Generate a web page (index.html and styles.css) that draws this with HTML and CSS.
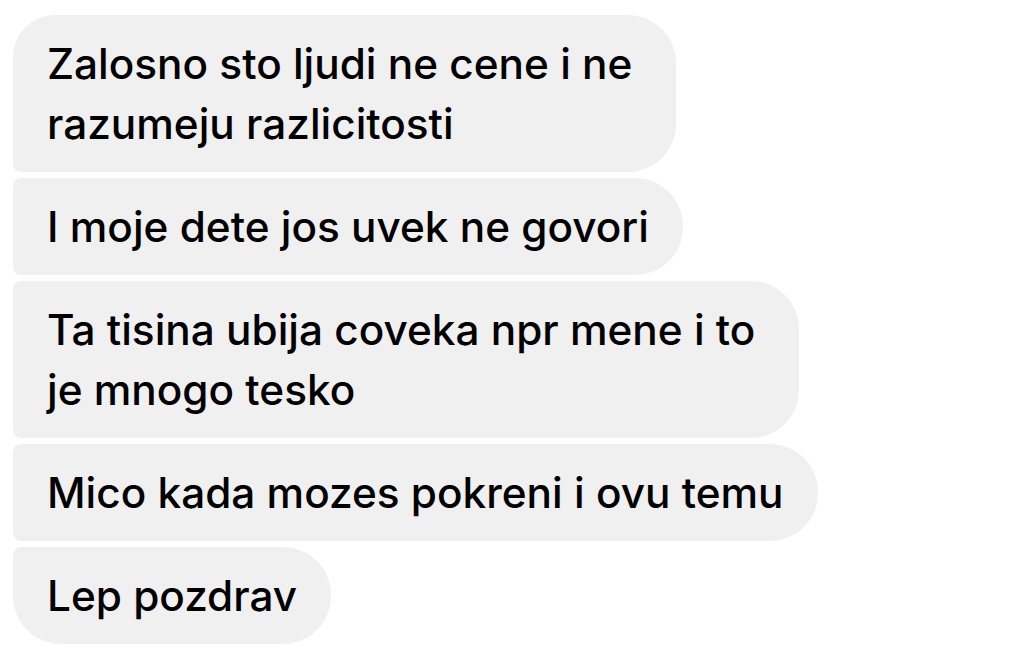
FILE: index.html
```html
<!DOCTYPE html>
<html lang="sr">
<head>
    <meta charset="UTF-8">
    <meta name="viewport" content="width=device-width, initial-scale=1.0">
    <title>Poruke</title>
    <link rel="stylesheet" href="styles.css">
</head>
<body>
    <div class="thread">
        <div class="bubble first wrapped">Zalosno sto ljudi ne cene i ne<br>razumeju razlicitosti</div>
        <div class="bubble">I moje dete jos uvek ne govori</div>
        <div class="bubble wrapped">Ta tisina ubija coveka npr mene i to<br>je mnogo tesko</div>
        <div class="bubble">Mico kada mozes pokreni i ovu temu</div>
        <div class="bubble last">Lep pozdrav</div>
    </div>
</body>
</html>
```

FILE: styles.css
```css
body {
    margin: 0;
    padding: 0;
    background-color: #ffffff;
    font-family: Inter, "Noto Sans", sans-serif;
    color: #000000;
}
.thread {
    display: flex;
    flex-direction: column;
    align-items: flex-start;
    gap: 6px;
    padding: 15px 13px;
}
.bubble {
    background-color: #f0f0f0;
    font-size: 42.3px;
    font-weight: 500;
    line-height: 60px;
    padding: 19px 34px 18px 34px;
    border-radius: 8px 48px 48px 8px;
}
/* lines that wrap keep the wider bubble */
.bubble.wrapped {
    padding-right: 44px;
}
.bubble.first {
    border-top-left-radius: 42px;
}
.bubble.last {
    border-bottom-left-radius: 48px;
}
```
